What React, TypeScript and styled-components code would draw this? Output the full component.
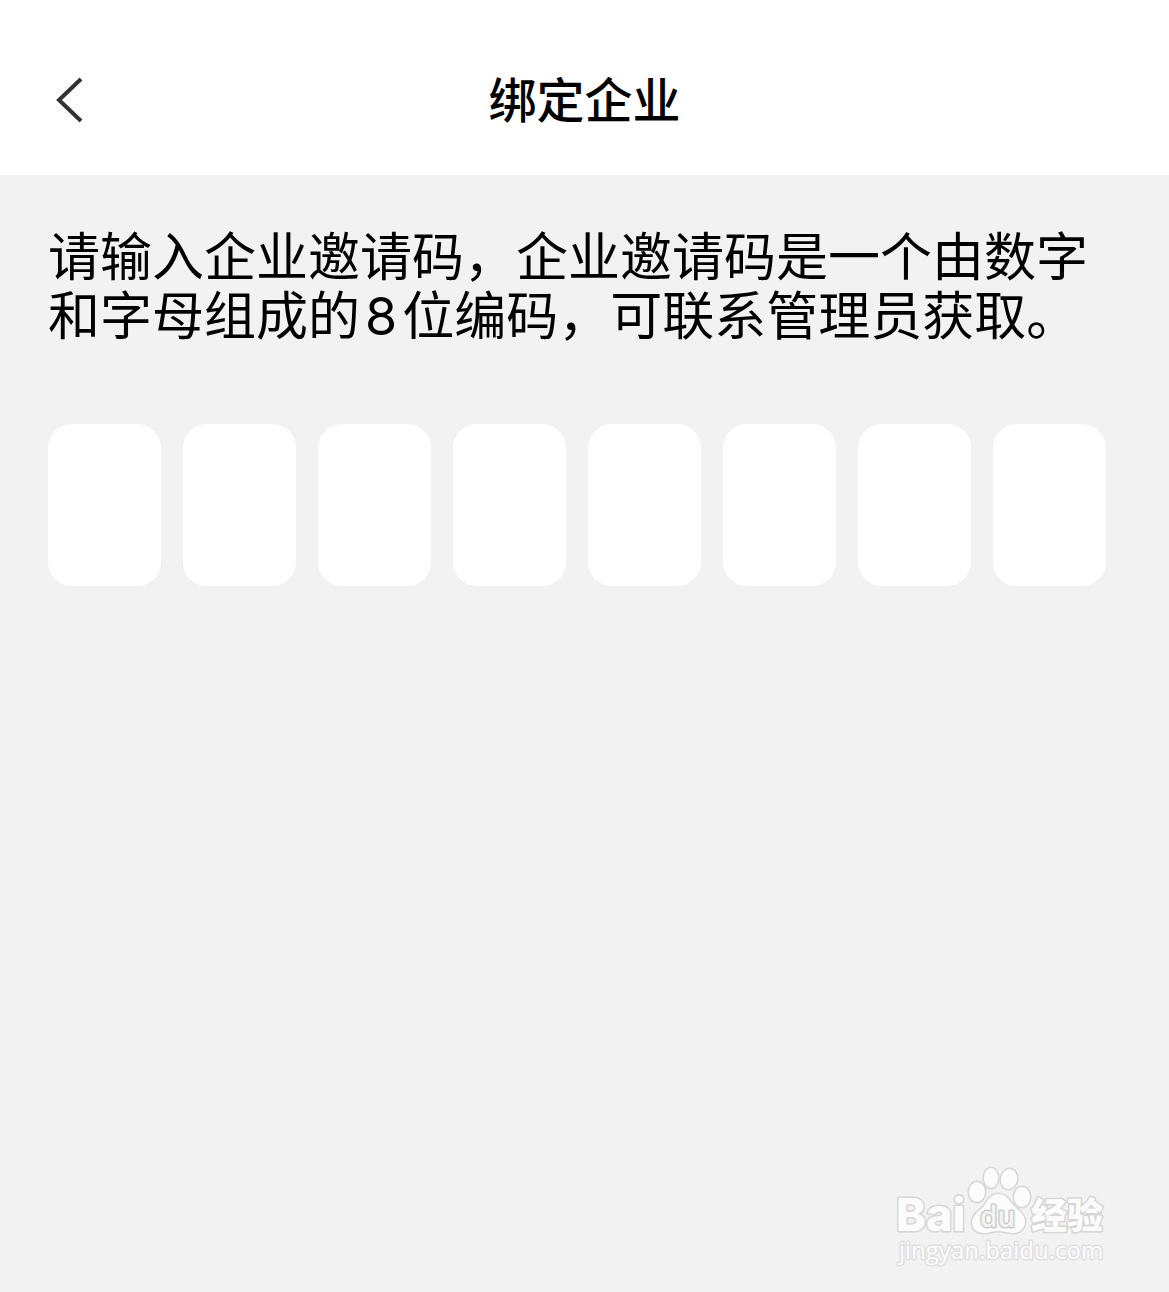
import React, { useRef, useState } from "react";
import styled, { createGlobalStyle } from "styled-components";

const CODE_LENGTH = 8;

const GlobalStyle = createGlobalStyle`
  * {
    box-sizing: border-box;
  }
  body {
    margin: 0;
    background: #f2f2f2;
    color: #000;
    font-family: Inter, "Noto Sans CJK SC", sans-serif;
  }
`;

const Page = styled.div`
  display: flex;
  flex-direction: column;
  min-height: 100vh;
`;

const Header = styled.header`
  display: grid;
  grid-template-columns: 48px 1fr 48px;
  align-items: center;
  padding: 65px 48px 38px;
  background: #fff;
`;

const BackButton = styled.button`
  display: flex;
  align-items: center;
  width: 48px;
  height: 72px;
  padding: 0;
  border: 0;
  background: none;
  cursor: pointer;
`;

const Title = styled.h1`
  margin: 0;
  font-size: 48px;
  font-weight: 500;
  line-height: 72px;
  text-align: center;
`;

const Main = styled.main`
  display: flex;
  flex-direction: column;
  gap: 78px;
  padding: 53px 63px 0 48px;
`;

const Hint = styled.p`
  margin: 0;
  font-size: 52px;
  line-height: 59px;
`;

const Digit = styled.span`
  display: inline-block;
  margin: 0 5px;
`;

const CodeRow = styled.div`
  display: flex;
  gap: 22px;
`;

const CodeBox = styled.input`
  flex: 1;
  min-width: 0;
  height: 162px;
  padding: 0;
  border: 0;
  border-radius: 24px;
  outline: none;
  background: #fff;
  font: inherit;
  font-size: 52px;
  text-align: center;
`;

const Footer = styled.footer`
  display: flex;
  justify-content: flex-end;
  margin-top: auto;
  padding: 0 55px 18px 0;
`;

const Mark = styled.svg`
  display: block;
  fill: #fcfcfc;
  stroke: #d6d6d6;
  stroke-width: 3px;
  stroke-linejoin: round;
  paint-order: stroke;
`;

const MarkText = styled.text<{ $size: number; $weight: number; $latin?: string }>`
  font-family: ${(p) => p.$latin ?? '"Open Sans"'}, "Noto Sans CJK SC", sans-serif;
  font-size: ${(p) => p.$size}px;
  font-weight: ${(p) => p.$weight};
`;

function BackIcon() {
  return (
    <svg width="44" height="48" viewBox="0 0 44 48" fill="none" stroke="#333" strokeWidth="4" aria-hidden="true">
      <path d="M33 2 11 23 33 44" />
    </svg>
  );
}

function Watermark() {
  return (
    <Mark width="224" height="114" viewBox="0 0 224 114" role="img" aria-label="Baidu 经验">
      <MarkText x="6" y="71" $size={45} $weight={800} $latin="Inter">Bai</MarkText>
      <ellipse cx="87" cy="32" rx="8" ry="10" />
      <ellipse cx="101" cy="18" rx="7" ry="10" />
      <ellipse cx="119" cy="19" rx="8" ry="10" transform="rotate(10 119 19)" />
      <ellipse cx="132" cy="37" rx="8" ry="10" />
      <path d="M108 34C101 34 98 40 94 46C89 51 82 55 82 63C82 69 87 73 94 73C99 73 103 71 108 71C114 71 118 73 123 73C130 73 135 68 135 61C135 55 129 51 124 46C119 40 116 34 108 34Z" />
      <MarkText x="90" y="67" $size={28} $weight={600} fill="#f2f2f2" stroke="#cccccc">du</MarkText>
      <MarkText x="141" y="69" $size={36} $weight={900}>经验</MarkText>
      <MarkText x="9" y="99" $size={24} $weight={500} stroke="#e0e0e0">jingyan.baidu.com</MarkText>
    </Mark>
  );
}

export default function App() {
  const [code, setCode] = useState<string[]>(Array(CODE_LENGTH).fill(""));
  const boxes = useRef<(HTMLInputElement | null)[]>([]);

  const update = (index: number, value: string) => {
    setCode(code.map((char, i) => (i === index ? value : char)));
    if (value) boxes.current[index + 1]?.focus();
  };

  return (
    <Page>
      <GlobalStyle />
      <Header>
        <BackButton type="button" aria-label="返回">
          <BackIcon />
        </BackButton>
        <Title>绑定企业</Title>
      </Header>
      <Main>
        <Hint>
          请输入企业邀请码，企业邀请码是一个由数字和字母组成的<Digit>8</Digit>位编码，可联系管理员获取。
        </Hint>
        <CodeRow role="group" aria-label="企业邀请码">
          {code.map((char, i) => (
            <CodeBox
              key={i}
              ref={(el) => {
                boxes.current[i] = el;
              }}
              type="text"
              maxLength={1}
              aria-label={`第${i + 1}位`}
              value={char}
              onChange={(e) => update(i, e.target.value)}
            />
          ))}
        </CodeRow>
      </Main>
      <Footer>
        <Watermark />
      </Footer>
    </Page>
  );
}
